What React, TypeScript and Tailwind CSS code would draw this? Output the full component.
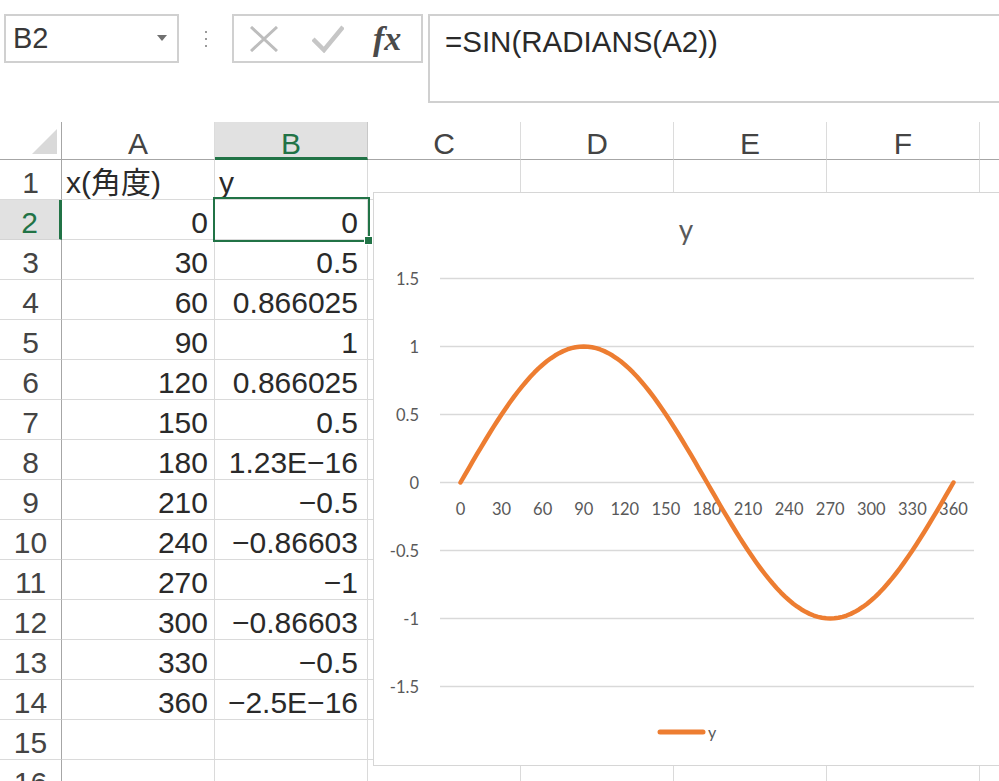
import React from "react";

const COLS = ["A", "B", "C", "D", "E", "F", "G"];

type Row = { n: number; a: string; b: string; left?: boolean };

const ROWS: Row[] = [
  { n: 1, a: "x(角度)", b: "y", left: true },
  { n: 2, a: "0", b: "0" },
  { n: 3, a: "30", b: "0.5" },
  { n: 4, a: "60", b: "0.866025" },
  { n: 5, a: "90", b: "1" },
  { n: 6, a: "120", b: "0.866025" },
  { n: 7, a: "150", b: "0.5" },
  { n: 8, a: "180", b: "1.23E−16" },
  { n: 9, a: "210", b: "−0.5" },
  { n: 10, a: "240", b: "−0.86603" },
  { n: 11, a: "270", b: "−1" },
  { n: 12, a: "300", b: "−0.86603" },
  { n: 13, a: "330", b: "−0.5" },
  { n: 14, a: "360", b: "−2.5E−16" },
  { n: 15, a: "", b: "" },
  { n: 16, a: "", b: "" },
];

const Y0 = 482.5;
const K = 136;
const X0 = 460.5;
const DX = 41.08;

function Chart() {
  const yTicks = [1.5, 1, 0.5, 0, -0.5, -1, -1.5];
  const xLabels = Array.from({ length: 13 }, (_, i) => String(i * 30));
  const pts: string[] = [];
  for (let i = 0; i <= 120; i++) {
    const deg = i * 3;
    const x = X0 + DX * (deg / 30);
    const y = Y0 - K * Math.sin((deg * Math.PI) / 180);
    pts.push(`${i === 0 ? "M" : "L"}${x.toFixed(2)} ${y.toFixed(2)}`);
  }
  return (
    <div className="absolute left-[373px] top-[192px] w-[640px] h-[574px] border border-[#d6d6d6] bg-white">
      <svg
        className="absolute left-[-1px] top-[-1px]"
        width={640}
        height={574}
        viewBox="373 192 640 574"
        fontFamily="Lato, 'Open Sans', sans-serif"
      >
        <text x={686} y={240} fontSize={28} fill="#595959" textAnchor="middle">
          y
        </text>
        {yTicks.map((v) => {
          const y = Y0 - K * v;
          return (
            <g key={v}>
              <line x1={440} x2={974} y1={y} y2={y} stroke="#d9d9d9" strokeWidth={1.3} />
              <text x={419} y={y + 6} fontSize={16.5} fill="#595959" textAnchor="end">
                {String(v)}
              </text>
            </g>
          );
        })}
        {xLabels.map((l, i) => (
          <text key={l} x={X0 + DX * i} y={515} fontSize={16.5} fill="#595959" textAnchor="middle">
            {l}
          </text>
        ))}
        <path
          d={pts.join(" ")}
          fill="none"
          stroke="#ED7D31"
          strokeWidth={4.5}
          strokeLinecap="round"
          strokeLinejoin="round"
        />
        <line x1={660} x2={703} y1={732} y2={732} stroke="#ED7D31" strokeWidth={5} strokeLinecap="round" />
        <text x={708} y={738} fontSize={16} fill="#595959">
          y
        </text>
      </svg>
    </div>
  );
}

function Toolbar() {
  return (
    <div className="flex h-[122px] items-start pt-[14px]">
      <div className="ml-[4px] w-[175px] h-[49px] shrink-0 border-2 border-[#d0d0d0] flex items-center justify-between pl-[7px] pr-[10px]">
        <span className="text-[29px] leading-none text-[#383838]">B2</span>
        <svg width={10} height={7} viewBox="0 0 10 7">
          <polygon points="0,0 10,0 5,6" fill="#707070" />
        </svg>
      </div>
      <div className="w-[53px] h-[49px] shrink-0 flex flex-col items-center justify-center gap-[5px]">
        <div className="w-[2px] h-[2px] bg-[#9a9a9a]" />
        <div className="w-[2px] h-[2px] bg-[#9a9a9a]" />
        <div className="w-[2px] h-[2px] bg-[#9a9a9a]" />
      </div>
      <div className="w-[191px] h-[49px] shrink-0 border-2 border-[#d0d0d0] flex items-center">
        <svg className="ml-[16px]" width={28} height={26} viewBox="0 0 28 26">
          <path d="M1 1 L27 25 M27 1 L1 25" stroke="#bdbdbd" strokeWidth={3} fill="none" />
        </svg>
        <svg className="ml-[34px]" width={32} height={28} viewBox="0 0 32 28">
          <path d="M1 14 L12 25 L31 2" stroke="#c6c6c6" strokeWidth={4.5} fill="none" />
        </svg>
        <span className="ml-[29px] text-[34px] leading-none italic font-bold text-[#4a4a4a] font-['Liberation_Serif',serif]">
          fx
        </span>
      </div>
      <div className="ml-[5px] w-[620px] h-[89px] shrink-0 border-2 border-[#d0d0d0] pl-[15px] pt-[11px]">
        <span className="text-[29.5px] leading-none text-[#2a2a2a]">=SIN(RADIANS(A2))</span>
      </div>
    </div>
  );
}

function HeaderRow() {
  return (
    <div className="flex h-[38px]">
      <div className="w-[62px] shrink-0 h-[38px] border-r border-b border-[#a6a6a6] relative">
        <svg className="absolute left-[32px] top-[7px]" width={25} height={25} viewBox="0 0 25 25">
          <polygon points="25,0 25,25 0,25" fill="#d9d9d9" />
        </svg>
      </div>
      {COLS.map((c) =>
        c === "B" ? (
          <div
            key={c}
            className="w-[153px] shrink-0 h-[38px] bg-[#e1e1e1] border-r border-r-[#c8c8c8] border-b-[3px] border-b-[#217346] flex items-center justify-center pt-[8px] text-[30px] leading-none text-[#217346]"
          >
            {c}
          </div>
        ) : (
          <div
            key={c}
            className="w-[153px] shrink-0 h-[38px] border-r border-r-[#dcdcdc] border-b border-b-[#a6a6a6] flex items-center justify-center pt-[6px] text-[30px] leading-none text-[#444]"
          >
            {c === "G" ? "" : c}
          </div>
        )
      )}
    </div>
  );
}

function DataRow({ r }: { r: Row }) {
  const sel = r.n === 2;
  return (
    <div className="flex h-[40px]">
      <div
        className={
          sel
            ? "w-[62px] shrink-0 h-[40px] bg-[#e1e1e1] border-b border-b-[#d4d4d4] border-r-[3px] border-r-[#217346] flex items-end justify-center pb-[1px] text-[30px] leading-none text-[#217346]"
            : "w-[62px] shrink-0 h-[40px] border-b border-b-[#dadada] border-r border-r-[#a6a6a6] flex items-end justify-center pb-[1px] text-[30px] leading-none text-[#444]"
        }
      >
        {r.n}
      </div>
      <div
        className={
          r.left
            ? "w-[153px] shrink-0 h-[40px] border-b border-r border-[#dadada] flex items-end justify-start pl-[4px] pb-[1px] text-[30px] leading-none text-[#2a2a2a] whitespace-nowrap"
            : "w-[153px] shrink-0 h-[40px] border-b border-r border-[#dadada] flex items-end justify-end pr-[6px] pb-[1px] text-[30px] leading-none text-[#2a2a2a] whitespace-nowrap"
        }
      >
        {r.a}
      </div>
      <div
        className={
          r.left
            ? "w-[153px] shrink-0 h-[40px] border-b border-r border-[#dadada] flex items-end justify-start pl-[4px] pb-[1px] text-[30px] leading-none text-[#2a2a2a] whitespace-nowrap"
            : "w-[153px] shrink-0 h-[40px] border-b border-r border-[#dadada] flex items-end justify-end pr-[9px] pb-[1px] text-[30px] leading-none text-[#2a2a2a] whitespace-nowrap"
        }
      >
        {r.b}
      </div>
      {["C", "D", "E", "F", "G"].map((c) => (
        <div key={c} className="w-[153px] shrink-0 h-[40px] border-b border-r border-[#dadada]" />
      ))}
    </div>
  );
}

export default function App() {
  return (
    <div className="relative w-[999px] h-[781px] overflow-hidden bg-white font-['Liberation_Sans','Noto_Sans_CJK_JP',sans-serif]">
      <Toolbar />
      <HeaderRow />
      {ROWS.map((r) => (
        <DataRow key={r.n} r={r} />
      ))}
      <div className="absolute left-[213px] top-[197px] w-[157px] h-[45px] border-2 border-[#217346]" />
      <div className="absolute left-[364px] top-[236px] w-[9px] h-[9px] bg-[#217346] border border-white" />
      <Chart />
    </div>
  );
}
